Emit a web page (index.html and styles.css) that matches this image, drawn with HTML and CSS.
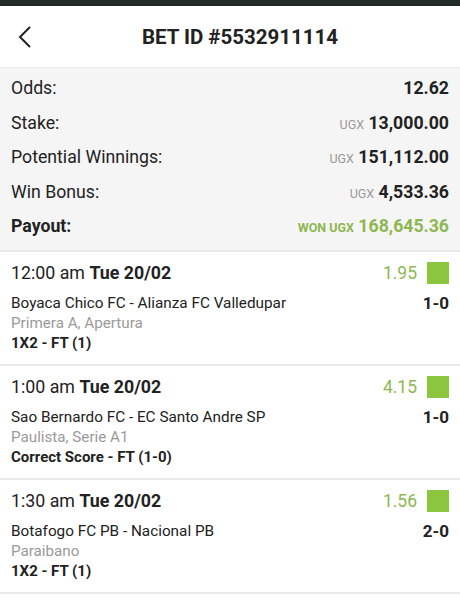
FILE: index.html
```html
<!DOCTYPE html>
<html lang="en">
<head>
  <meta charset="UTF-8" />
  <meta name="viewport" content="width=device-width, initial-scale=1.0"/>
  <title>Bet Details</title>
  <link rel="stylesheet" href="styles.css">
</head>
<body>
  <div class="status-bar"></div>

  <header class="header">
    <button class="back" aria-label="Back">
      <svg width="14" height="22" viewBox="0 0 14 22">
        <path d="M12 1 L2 11 L12 21" fill="none" stroke="#222" stroke-width="2"/>
      </svg>
    </button>
    <h1>BET ID #5532911114</h1>
  </header>

  <section class="summary">
    <div class="row">
      <span class="label">Odds:</span>
      <span class="value">12.62</span>
    </div>
    <div class="row">
      <span class="label">Stake:</span>
      <span class="value"><small>UGX</small> 13,000.00</span>
    </div>
    <div class="row">
      <span class="label">Potential Winnings:</span>
      <span class="value"><small>UGX</small> 151,112.00</span>
    </div>
    <div class="row">
      <span class="label">Win Bonus:</span>
      <span class="value"><small>UGX</small> 4,533.36</span>
    </div>
    <div class="row">
      <span class="label bold">Payout:</span>
      <span class="value won"><small>WON UGX</small> 168,645.36</span>
    </div>
  </section>

  <section class="selections">
    <div class="selection">
      <div class="sel-top">
        <span class="time">12:00 am <b>Tue 20/02</b></span>
        <span class="odd">1.95 <i class="status"></i></span>
      </div>
      <div class="sel-teams">
        <span>Boyaca Chico FC - Alianza FC Valledupar</span>
        <span class="score">1-0</span>
      </div>
      <div class="league">Primera A, Apertura</div>
      <div class="market">1X2 - FT (1)</div>
    </div>

    <div class="selection">
      <div class="sel-top">
        <span class="time">1:00 am <b>Tue 20/02</b></span>
        <span class="odd">4.15 <i class="status"></i></span>
      </div>
      <div class="sel-teams">
        <span>Sao Bernardo FC - EC Santo Andre SP</span>
        <span class="score">1-0</span>
      </div>
      <div class="league">Paulista, Serie A1</div>
      <div class="market">Correct Score - FT (1-0)</div>
    </div>

    <div class="selection">
      <div class="sel-top">
        <span class="time">1:30 am <b>Tue 20/02</b></span>
        <span class="odd">1.56 <i class="status"></i></span>
      </div>
      <div class="sel-teams">
        <span>Botafogo FC PB - Nacional PB</span>
        <span class="score">2-0</span>
      </div>
      <div class="league">Paraibano</div>
      <div class="market">1X2 - FT (1)</div>
    </div>
  </section>
</body>
</html>
```

FILE: styles.css
```css
:root {
  --dark: #222222;
  --green: #8cc63f;
  --green-text: #8db750;
  --gray: #9a9a9a;
  --line: #e9e9e9;
  --bg: #f5f5f5;
}

* {
  box-sizing: border-box;
  margin: 0;
  padding: 0;
  font-family: Roboto, 'Liberation Sans', sans-serif;
}

body {
  background: #fff;
  color: var(--dark);
}

.status-bar {
  height: 6px;
  background: #232927;
}

.header {
  height: 61px;
  display: flex;
  align-items: center;
  justify-content: center;
  position: relative;
}

.back {
  position: absolute;
  left: 18px;
  top: 20px;
  background: none;
  border: none;
}

.header h1 {
  font-size: 20.5px;
  font-weight: 700;
  margin-left: 20px;
}

.summary {
  background: var(--bg);
  border-top: 1px solid var(--line);
  padding: 3px 11px 6px;
}

.row {
  height: 34.5px;
  display: flex;
  align-items: center;
  justify-content: space-between;
  font-size: 17.7px;
}

.label.bold {
  font-weight: 700;
}

.value {
  font-weight: 700;
}

.value small {
  font-size: 12.5px;
  font-weight: 400;
  color: var(--gray);
}

.value.won,
.value.won small {
  color: var(--green-text);
}

.value.won small {
  font-weight: 700;
}

.selection {
  border-top: 2px solid var(--line);
  padding: 10px 11px 10px;
  height: 114px;
}

.sel-top,
.sel-teams {
  display: flex;
  justify-content: space-between;
  align-items: center;
}

.time {
  font-size: 17.8px;
}

.odd {
  display: flex;
  align-items: center;
  gap: 10px;
  font-size: 17.5px;
  color: var(--green-text);
}

.status {
  width: 22px;
  height: 22px;
  background: var(--green);
}

.sel-teams {
  font-size: 15.3px;
  margin-top: 9px;
}

.score {
  font-weight: 700;
  font-size: 17px;
}

.league {
  font-size: 15.2px;
  color: var(--gray);
  line-height: 20px;
}

.market {
  font-size: 15px;
  font-weight: 700;
  line-height: 20px;
}

.selections {
  border-bottom: 2px solid var(--line);
}
```
